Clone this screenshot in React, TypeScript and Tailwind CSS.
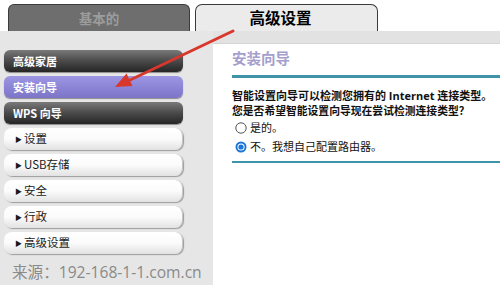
import React from "react";

const darkPill =
  "h-[22px] rounded-[6px] bg-linear-to-b from-[#7a7a7a] via-[#4a4a4a] to-[#262626] text-white font-bold text-[11px] flex items-center pl-[9px] shadow-[0_1px_1px_#8a8a8a]";
const whitePill =
  "h-[22px] rounded-[8px] bg-linear-to-b from-white via-[#fbfbfb] to-[#e2e2e2] text-[#1a1a1a] text-[11.5px] flex items-center pl-[11px] shadow-[1px_1px_1px_#9c9c9c] border-r border-[#c4c4c4]";

function WhiteItem({ label }: { label: string }) {
  return (
    <div className={whitePill}>
      <span className="text-[7px] mr-[2px] leading-none">▶</span>
      <span>{label}</span>
    </div>
  );
}

export default function App() {
  return (
    <div className="relative w-[500px] h-[285px] overflow-hidden bg-white font-['Open_Sans','Noto_Sans_CJK_SC',sans-serif]">
      {/* Tabs */}
      <div className="flex h-[31px] items-end pl-[8px] gap-[5px]">
        <div className="w-[182px] h-[27px] rounded-t-[6px] bg-[#6e6e6e] border border-b-0 border-[#3c3c3c] flex items-center justify-center text-[13.5px] font-bold text-[#9c9c9c] font-['Noto_Sans_CJK_SC',sans-serif]">
          基本的
        </div>
        <div className="w-[183px] h-[27px] rounded-t-[7px] bg-[#ebebeb] border border-b-0 border-[#3a3a3a] flex items-center justify-center pr-[12px] text-[15.5px] font-bold text-black font-['Noto_Sans_CJK_SC',sans-serif]">
          高级设置
        </div>
      </div>

      <div className="flex h-[254px]">
        {/* Sidebar */}
        <div className="w-[213px] bg-[#e6e6e6] pt-[19px] pl-[4px] font-['Noto_Sans_CJK_SC',sans-serif]">
          <div className="w-[179px] flex flex-col gap-[4px]">
            <div className={darkPill}>高级家居</div>
            <div className="h-[22px] rounded-[6px] bg-linear-to-b from-[#9d96e4] to-[#7c74c8] text-white font-bold text-[11px] flex items-center pl-[9px] shadow-[0_1px_1px_#8a8a8a]">
              安装向导
            </div>
            <div className={darkPill}>WPS 向导</div>
            <WhiteItem label="设置" />
            <WhiteItem label="USB存储" />
            <WhiteItem label="安全" />
            <WhiteItem label="行政" />
            <WhiteItem label="高级设置" />
          </div>
          <div className="mt-[6px] pl-[8px] whitespace-nowrap text-[15.6px] leading-[24px] text-[#8a8a8a] font-['Open_Sans','Noto_Sans_CJK_SC',sans-serif]">
            来源：192-168-1-1.com.cn
          </div>
        </div>

        {/* Content */}
        <div className="flex-1 flex flex-col">
          <div className="h-[13px] bg-[#e2e2e2] border-b border-[#d6d6d6]" />
          <div className="pl-[19px] pt-[4px]">
            <div className="text-[14.5px] font-bold text-[#a49ecd] leading-[20px] font-['Noto_Sans_CJK_SC',sans-serif]">
              安装向导
            </div>
            <div className="mt-[7px] h-[2.5px] bg-[#3f93a9]" />
            <div className="mt-[10px] whitespace-nowrap text-[11px] font-bold text-[#111] leading-[15px]">
              智能设置向导可以检测您拥有的 Internet 连接类型。
            </div>
            <div className="whitespace-nowrap text-[10.8px] font-bold text-[#111] leading-[15px] font-['Noto_Sans_CJK_SC',sans-serif]">
              您是否希望智能设置向导现在尝试检测连接类型？
            </div>
            <div className="mt-[1px] flex items-center h-[18px] pl-[3px] text-[11px] text-[#111] font-['Noto_Sans_CJK_SC',sans-serif]">
              <svg width="12" height="12" viewBox="0 0 12 12" className="mr-[3px]">
                <circle cx="6" cy="6" r="5.2" fill="white" stroke="#555" strokeWidth="1" />
              </svg>
              是的。
            </div>
            <div className="mt-[1px] flex items-center h-[18px] pl-[3px] text-[11px] text-[#111] font-['Noto_Sans_CJK_SC',sans-serif]">
              <svg width="12" height="12" viewBox="0 0 12 12" className="mr-[3px]">
                <circle cx="6" cy="6" r="5.5" fill="#1b74d8" />
                <circle cx="6" cy="6" r="3.6" fill="white" />
                <circle cx="6" cy="6" r="2.6" fill="#1b74d8" />
              </svg>
              不。我想自己配置路由器。
            </div>
            <div className="mt-[5px] h-[2.5px] bg-[#3f93a9]" />
          </div>
        </div>
      </div>

      {/* Red annotation arrow */}
      <svg className="absolute left-0 top-0 pointer-events-none" width="500" height="285" viewBox="0 0 500 285">
        <line x1="233" y1="31" x2="128" y2="81" stroke="#d8372c" strokeWidth="3" strokeLinecap="round" />
        <polygon points="115,87 132.5,86 126.5,73.5" fill="#d8372c" />
      </svg>
    </div>
  );
}
